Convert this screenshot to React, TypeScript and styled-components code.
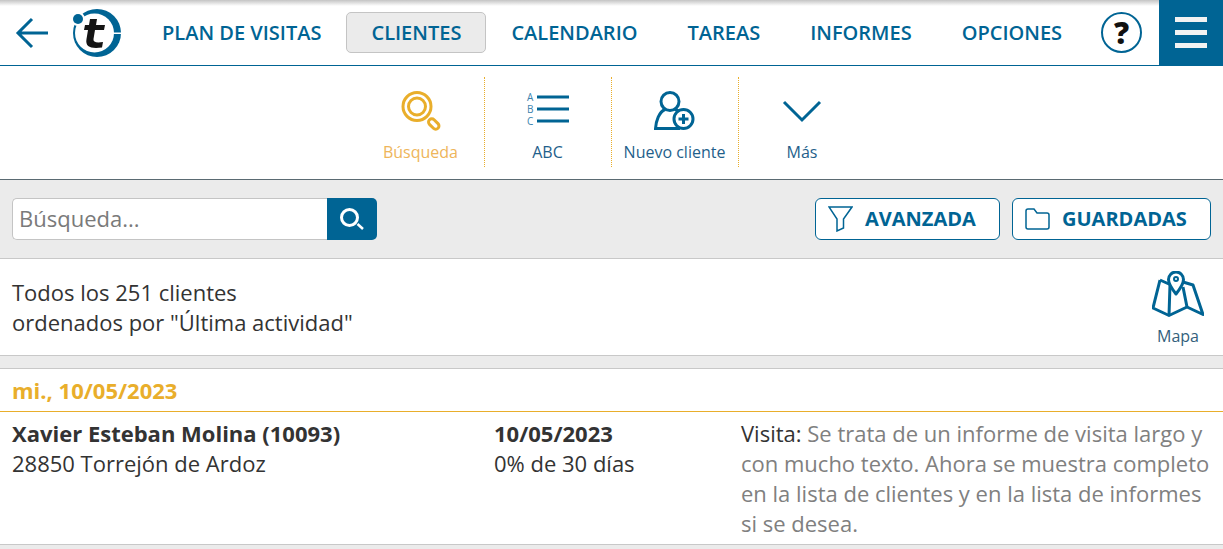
import React from 'react';
import styled, { createGlobalStyle } from 'styled-components';

const BLUE = '#006494';
const GOLD = '#e9ae2b';

const GlobalStyle = createGlobalStyle`
  html, body {
    margin: 0;
    padding: 0;
    background: #fff;
    font-family: "Open Sans", "Noto Sans", sans-serif;
    overflow: hidden;
  }
  * { box-sizing: border-box; }
`;

const Page = styled.div`
  width: 1223px;
  height: 549px;
  overflow: hidden;
  color: #333;
`;

const TopBar = styled.header`
  height: 66px;
  display: flex;
  align-items: stretch;
  background: linear-gradient(#c4c4c4, #fff 6px);
  border-bottom: 1px solid ${BLUE};
`;

const BackButton = styled.div`
  width: 64px;
  display: flex;
  align-items: center;
  padding-left: 15px;
`;

const Logo = styled.div`
  width: 66px;
  display: flex;
  align-items: center;
  padding-left: 8px;
`;

const Nav = styled.nav`
  display: flex;
  align-items: center;
  margin-left: 7px;
`;

const NavItem = styled.div<{ $active?: boolean }>`
  height: 41px;
  padding: 0 24px;
  display: flex;
  align-items: center;
  font-size: 20px;
  font-weight: 600;
  color: ${BLUE};
  white-space: nowrap;
  border-radius: 5px;
  border: 1px solid ${(p) => (p.$active ? '#c4c4c4' : 'transparent')};
  background: ${(p) => (p.$active ? '#ebebeb' : 'transparent')};
`;

const Help = styled.div`
  width: 41px;
  height: 41px;
  margin-left: 14px;
  align-self: center;
  border: 2px solid ${BLUE};
  border-radius: 50%;
  display: flex;
  align-items: center;
  justify-content: center;
  font-size: 30px;
  font-weight: 800;
  color: #111;
`;

const MenuButton = styled.div`
  margin-left: auto;
  width: 64px;
  background: ${BLUE};
  display: flex;
  flex-direction: column;
  align-items: center;
  justify-content: center;
  gap: 8px;
`;

const MenuLine = styled.span`
  width: 32px;
  height: 5px;
  background: #f2f2f2;
`;

const Toolbar = styled.div`
  height: 114px;
  display: flex;
  justify-content: center;
  padding-top: 11px;
  border-bottom: 1px solid #5a6a72;
`;

const Tool = styled.div<{ $gold?: boolean; $last?: boolean }>`
  width: 127px;
  height: 90px;
  display: flex;
  flex-direction: column;
  align-items: center;
  font-size: 16px;
  line-height: 22px;
  white-space: nowrap;
  color: ${(p) => (p.$gold ? '#eeb55a' : '#1f5f8b')};
  border-right: ${(p) => (p.$last ? 'none' : `1px dotted ${GOLD}`)};
`;

const ToolIcon = styled.div`
  height: 60px;
  padding-top: 8px;
  display: flex;
  align-items: center;
  justify-content: center;
  margin-bottom: 4px;
`;

const SearchBar = styled.div`
  height: 79px;
  background: #ebebeb;
  border-bottom: 1px solid #c8c8c8;
  padding: 18px 12px 0;
  display: flex;
  align-items: flex-start;
`;

const SearchGroup = styled.div`
  display: flex;
  width: 365px;
  height: 42px;
`;

const SearchInput = styled.div`
  flex: 1;
  background: #fff;
  border: 1px solid #c4c4c4;
  border-right: none;
  border-radius: 5px 0 0 5px;
  padding: 0 0 2px 6px;
  display: flex;
  align-items: center;
  font-size: 22px;
  color: #7a7a7a;
`;

const SearchButton = styled.div`
  width: 50px;
  background: ${BLUE};
  border-radius: 0 5px 5px 0;
  display: flex;
  align-items: center;
  justify-content: center;
`;

const ActionButton = styled.div<{ $width: number; $first?: boolean }>`
  width: ${(p) => p.$width}px;
  height: 42px;
  margin-left: ${(p) => (p.$first ? 'auto' : '12px')};
  background: #fff;
  border: 1px solid ${BLUE};
  border-radius: 6px;
  display: flex;
  align-items: center;
  padding-left: 12px;
  gap: 12px;
  font-size: 20px;
  font-weight: 700;
  color: ${BLUE};
`;

const ActionLabel = styled.span`
  margin-bottom: 2px;
`;

const Summary = styled.div`
  height: 97px;
  padding: 18px 12px 0;
  display: flex;
  justify-content: space-between;
  font-size: 22px;
  line-height: 30px;
  border-bottom: 1px solid #c8c8c8;
`;

const MapLink = styled.div`
  width: 52px;
  margin-top: -6px;
  margin-right: 7px;
  display: flex;
  flex-direction: column;
  align-items: center;
  font-size: 16px;
  line-height: 22px;
  color: #335f7c;
`;

const MapIcon = styled.svg`
  display: block;
  margin-bottom: 8px;
`;

const Gap = styled.div`
  height: 13px;
  background: #ebebeb;
  border-bottom: 1px solid #c8c8c8;
`;

const DateHeading = styled.div`
  height: 43px;
  padding: 7px 12px 0;
  font-size: 22px;
  line-height: 28px;
  font-weight: 700;
  color: ${GOLD};
  border-bottom: 1px solid ${GOLD};
`;

const ClientRow = styled.div`
  height: 133px;
  padding: 6px 12px 0;
  display: grid;
  grid-template-columns: 482px 247px 1fr;
  font-size: 22px;
  line-height: 30px;
  border-bottom: 1px solid #c8c8c8;
`;

const Strong = styled.div`
  font-weight: 700;
`;

const Muted = styled.span`
  color: #808080;
`;

const Footer = styled.div`
  height: 5px;
  background: #ebebeb;
`;

const tools = [
  {
    label: 'Búsqueda',
    gold: true,
    icon: (
      <svg width="40" height="40" viewBox="0 0 40 40" fill="none" stroke={GOLD}>
        <circle cx="16" cy="15.500" r="14" strokeWidth="3" />
        <circle cx="16" cy="15.500" r="8.500" strokeWidth="3" />
        <rect x="29.500" y="27" width="6.500" height="12" rx="3.200" transform="rotate(-45 32.750 33)" strokeWidth="3" />
      </svg>
    ),
  },
  {
    label: 'ABC',
    icon: (
      <svg width="44" height="44" viewBox="0 0 44 44" fill={BLUE}>
        <text x="1" y="11.500" fontSize="10" fontFamily="Open Sans" fill="#3b82ad">A</text>
        <text x="1" y="23.500" fontSize="10" fontFamily="Open Sans" fill="#3b82ad">B</text>
        <text x="1" y="35.500" fontSize="10" fontFamily="Open Sans" fill="#3b82ad">C</text>
        <rect x="11" y="6.500" width="32" height="3" />
        <rect x="11" y="18.500" width="32" height="3" />
        <rect x="11" y="30.500" width="32" height="3" />
      </svg>
    ),
  },
  {
    label: 'Nuevo cliente',
    icon: (
      <svg width="42" height="40" viewBox="0 0 42 40" fill="none" stroke={BLUE} strokeWidth="3">
        <circle cx="16" cy="10.500" r="9" />
        <path d="M11 18.500 C5 21 2 30 1.500 37.500 H26" />
        <path d="M21 18.500 C23 19 25 20 26 21" />
        <circle cx="29.500" cy="28" r="9.500" fill="#fff" />
        <path d="M29.500 23 V33 M24.500 28 H34.500" />
      </svg>
    ),
  },
  {
    label: 'Más',
    last: true,
    icon: (
      <svg width="40" height="24" viewBox="0 0 40 24" fill="none" stroke={BLUE} strokeWidth="3">
        <path d="M2 3 L20 21 L38 3" />
      </svg>
    ),
  },
];

const navItems = ['PLAN DE VISITAS', 'CLIENTES', 'CALENDARIO', 'TAREAS', 'INFORMES', 'OPCIONES'];

export default function App() {
  return (
    <Page>
      <GlobalStyle />
      <TopBar>
        <BackButton>
          <svg width="34" height="32" viewBox="0 0 34 32" fill="none" stroke={BLUE} strokeWidth="3">
            <path d="M33 16 H3 M17 2 L3 16 L17 30" />
          </svg>
        </BackButton>
        <Logo>
          <svg width="50" height="50" viewBox="0 0 50 50">
            <circle cx="25" cy="25" r="24" fill={BLUE} />
            <circle cx="22.500" cy="25" r="19.500" fill="#fff" />
            <rect x="39" y="24.500" width="11" height="1.500" fill="#fff" />
            <circle cx="6" cy="11" r="7" fill="#fff" />
            <circle cx="6" cy="11" r="5" fill={BLUE} />
            <path d="M18 11 H25 L24 17 H33 L32 22 H23 L21.500 31 C21 34 24 35 31 34 L30 39.500 C19 41 13 39 14.500 31 L16 22 H12 L13 17 H17 Z" fill="#151515" />
          </svg>
        </Logo>
        <Nav>
          {navItems.map((item) => (
            <NavItem key={item} $active={item === 'CLIENTES'}>{item}</NavItem>
          ))}
        </Nav>
        <Help>?</Help>
        <MenuButton>
          <MenuLine />
          <MenuLine />
          <MenuLine />
        </MenuButton>
      </TopBar>
      <Toolbar>
        {tools.map((tool) => (
          <Tool key={tool.label} $gold={tool.gold} $last={tool.last}>
            <ToolIcon>{tool.icon}</ToolIcon>
            {tool.label}
          </Tool>
        ))}
      </Toolbar>
      <SearchBar>
        <SearchGroup>
          <SearchInput>Búsqueda...</SearchInput>
          <SearchButton>
            <svg width="24" height="22" viewBox="0 0 24 22" fill="none" stroke="#fff">
              <circle cx="9.500" cy="9.500" r="8" strokeWidth="3" />
              <path d="M17.500 16 L23 21" strokeWidth="2.500" />
            </svg>
          </SearchButton>
        </SearchGroup>
        <ActionButton $first $width={185}>
          <svg width="25" height="26" viewBox="0 0 25 26" fill="none" stroke={BLUE} strokeWidth="1.500">
            <path d="M1 1 H24 L15.500 13 V22 L9 25 V13 Z" />
          </svg>
          <ActionLabel>AVANZADA</ActionLabel>
        </ActionButton>
        <ActionButton $width={199}>
          <svg width="25" height="22" viewBox="0 0 25 22" fill="none" stroke={BLUE} strokeWidth="1.500">
            <path d="M1 3 Q1 1 3 1 H9 L12 5 H22 Q24 5 24 7 V19 Q24 21 22 21 H3 Q1 21 1 19 Z" />
          </svg>
          <ActionLabel>GUARDADAS</ActionLabel>
        </ActionButton>
      </SearchBar>
      <Summary>
        <div>
          Todos los 251 clientes
          <br />
          ordenados por "Última actividad"
        </div>
        <MapLink>
          <MapIcon width="52" height="46" viewBox="0 0 52 46" fill="none" stroke={BLUE} strokeWidth="3" strokeLinejoin="round">
            <path d="M8 9 L1 37 L17 44.500 L35 36 L51 43.500 L41 14 L31 11" />
            <path d="M8 9 L18 13.500 L17 44.500 M31 16 L35 36" />
            <path d="M24 23 C20 18 16.500 13 16.500 8.500 A7.500 7.500 0 0 1 31.500 8.500 C31.500 13 28 18 24 23 Z" fill="#fff" />
            <circle cx="24" cy="8" r="2" strokeWidth="2" />
          </MapIcon>
          Mapa
        </MapLink>
      </Summary>
      <Gap />
      <DateHeading>mi., 10/05/2023</DateHeading>
      <ClientRow>
        <div>
          <Strong>Xavier Esteban Molina (10093)</Strong>
          28850 Torrejón de Ardoz
        </div>
        <div>
          <Strong>10/05/2023</Strong>
          0% de 30 días
        </div>
        <div>
          Visita: <Muted>Se trata de un informe de visita largo y con mucho texto. Ahora se muestra completo en la lista de clientes y en la lista de informes si se desea.</Muted>
        </div>
      </ClientRow>
      <Footer />
    </Page>
  );
}
